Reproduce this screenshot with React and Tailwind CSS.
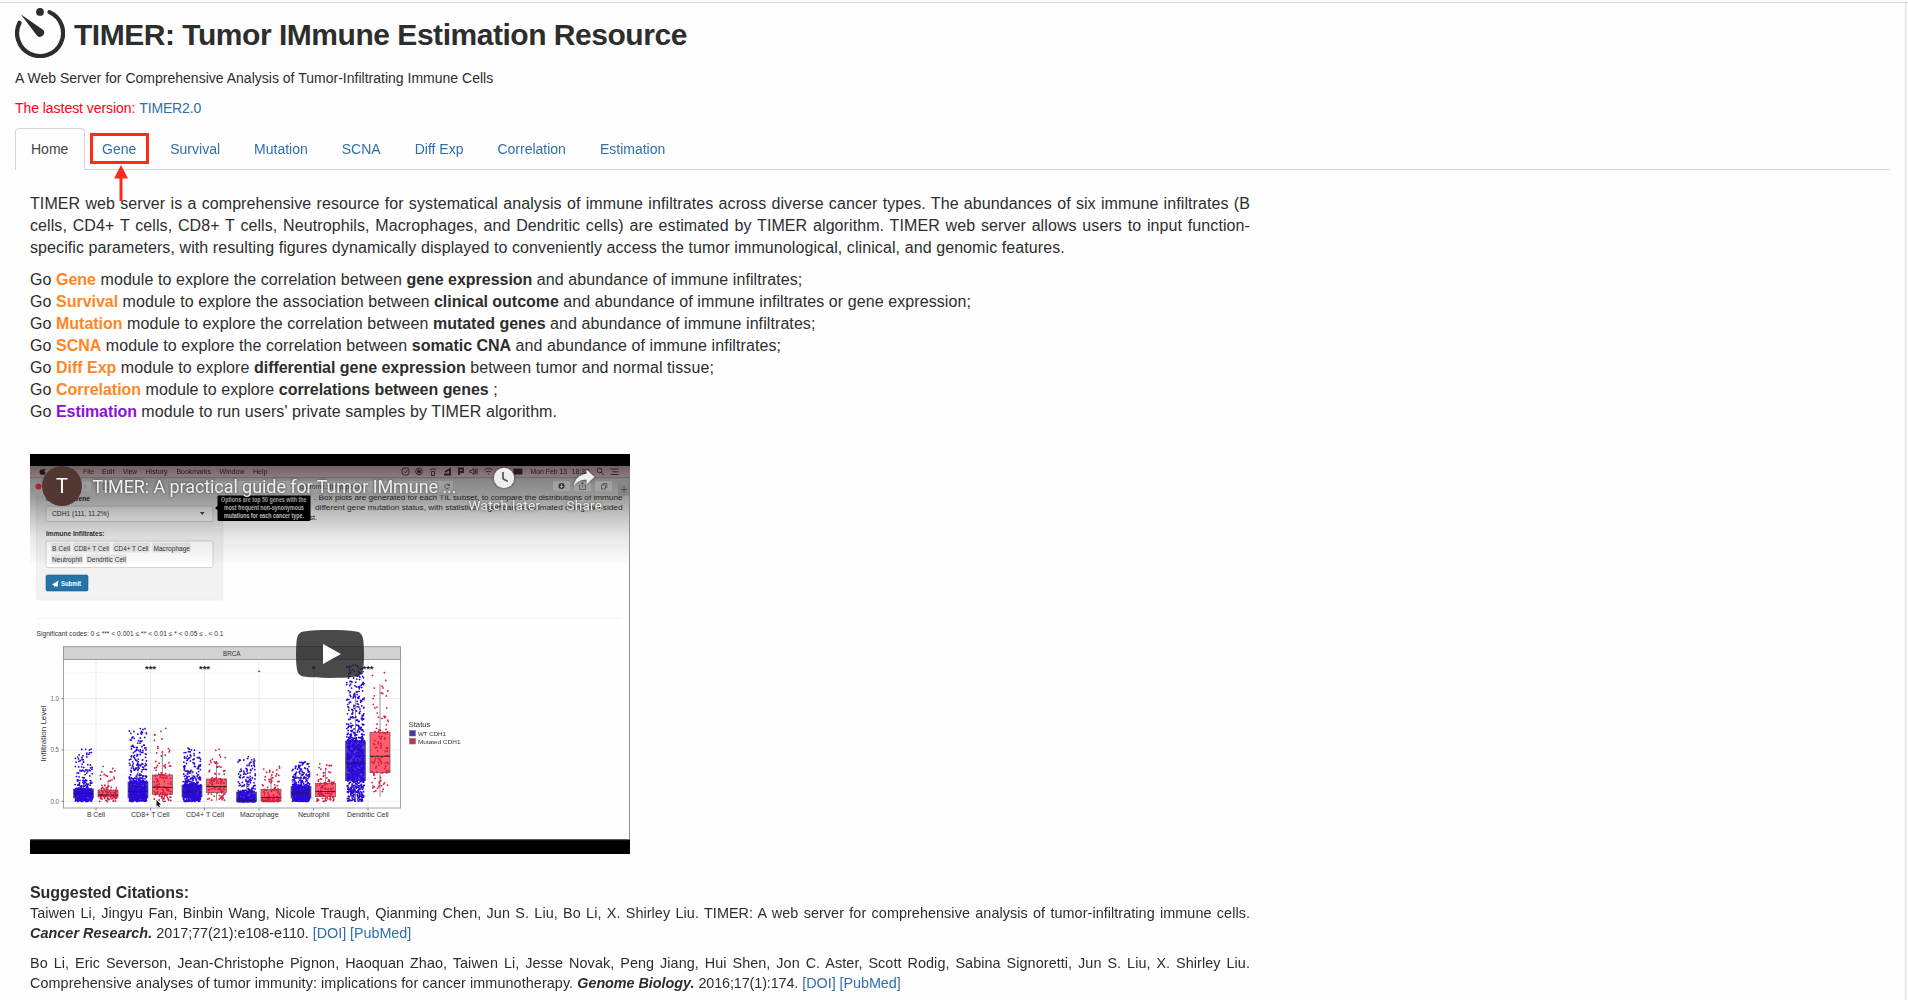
const TABS = ["Home", "Gene", "Survival", "Mutation", "SCNA", "Diff Exp", "Correlation", "Estimation"];

const MODULES = [
  { name: "Gene", before: "module to explore the correlation between", strong: "gene expression", after: "and abundance of immune infiltrates;" },
  { name: "Survival", before: "module to explore the association between", strong: "clinical outcome", after: "and abundance of immune infiltrates or gene expression;" },
  { name: "Mutation", before: "module to explore the correlation between", strong: "mutated genes", after: "and abundance of immune infiltrates;" },
  { name: "SCNA", before: "module to explore the correlation between", strong: "somatic CNA", after: "and abundance of immune infiltrates;" },
  { name: "Diff Exp", before: "module to explore", strong: "differential gene expression", after: "between tumor and normal tissue;" },
  { name: "Correlation", before: "module to explore", strong: "correlations between genes", after: ";" },
];

// Box plot groups: centre x, box top, median, box bottom, highest and lowest point, point count
const GROUPS = [
  { label: "B Cell", x: 66, lx: [57, 75], wt: [335, 339.5, 344, 295, 347.5, 380], mut: [336, 341, 343, 311, 347.5, 100], mark: "" },
  { label: "CD8+ T Cell", x: 120.5, lx: [101, 139.5], wt: [328, 337.5, 344, 274, 347.5, 620], mut: [321, 333.3, 340.3, 272, 347.5, 120], mark: "***" },
  { label: "CD4+ T Cell", x: 174.5, lx: [156, 194], wt: [331, 338, 343, 293, 347.5, 520], mut: [325, 332.5, 338.5, 295, 347, 110], mark: "***" },
  { label: "Macrophage", x: 229, lx: [210, 248.5], wt: [338, 346, 347.5, 302, 347.5, 400], mut: [335.5, 343.5, 347, 310, 347.5, 110], mark: "." },
  { label: "Neutrophil", x: 283.5, lx: [268, 299.5], wt: [332.5, 339, 344, 308, 347.5, 500], mut: [329.3, 337.5, 342.7, 309, 347.5, 110], mark: "*" },
  { label: "Dendritic Cell", x: 338, lx: [317, 358.5], wt: [287, 309.3, 326.7, 211, 347.5, 850], mut: [278.3, 302.3, 318.7, 213, 340, 120], mark: "***" },
];

function makeRandom(seed) {
  let s = seed;
  return () => {
    s = (s * 16807) % 2147483647;
    return s / 2147483647;
  };
}

function scatter(cx, [q3, med, q1, top, bottom, count], seed) {
  const rnd = makeRandom(seed);
  const pts = [];
  for (let i = 0; i < count; i++) {
    const u = i / count;
    let y;
    if (u < 0.25) y = med + rnd() * (q1 - med + 0.5);
    else if (u < 0.5) y = q3 + rnd() * (med - q3);
    else if (u < 0.7) y = q1 + rnd() * (bottom - q1);
    else y = q3 - (q3 - top) * Math.pow(rnd(), 1.9);
    pts.push([cx + (rnd() - 0.5) * 17.5, y]);
  }
  return pts.map(([x, y]) => `M${x.toFixed(1)} ${y.toFixed(1)}h.01`).join("");
}

function Box({ cx, d, fill, dot, seed }) {
  const [q3, med, q1, top] = d;
  const whisker = Math.max(top + 6, q3 - (q1 - q3) * 1.2);
  return (
    <g>
      <path d={`M${cx} ${whisker}V${q3}M${cx} ${q1}V${Math.min(347.5, q1 + (q1 - q3) * 0.6)}`} stroke="#777" strokeWidth="0.8" />
      <rect x={cx - 10} y={q3} width="20" height={q1 - q3} fill={fill} stroke="#555" strokeWidth="0.7" />
      <path d={scatter(cx, d, seed)} stroke={dot} strokeWidth="1.8" strokeLinecap="round" />
      <path d={`M${cx - 10} ${med}h20`} stroke="#222" strokeWidth="0.9" />
    </g>
  );
}

function Label({ x, x2, y, size = 7, fill = "#333", children, ...rest }) {
  return (
    <text x={x} y={y} fontSize={size} fill={fill} textLength={x2 - x} lengthAdjust="spacingAndGlyphs" {...rest}>
      {children}
    </text>
  );
}

function VideoStill() {
  return (
    <svg width="600" height="400" viewBox="0 0 600 400" fill="none" className="block font-['Liberation_Sans',sans-serif]">
      <defs>
        <linearGradient id="shade" x1="0" y1="0" x2="0" y2="1">
          <stop offset="0" stopColor="#000" stopOpacity="0.4" />
          <stop offset="0.3" stopColor="#000" stopOpacity="0.23" />
          <stop offset="0.6" stopColor="#000" stopOpacity="0.09" />
          <stop offset="1" stopColor="#000" stopOpacity="0.012" />
        </linearGradient>
        <linearGradient id="menu" x1="0" y1="0" x2="0" y2="1">
          <stop offset="0" stopColor="#6f6063" />
          <stop offset="1" stopColor="#8d7c80" />
        </linearGradient>
        <linearGradient id="bar" x1="0" y1="0" x2="0" y2="1">
          <stop offset="0" stopColor="#858585" />
          <stop offset="1" stopColor="#999" />
        </linearGradient>
      </defs>
      <rect width="600" height="400" fill="#000" />
      <g className="blur-[0.35px]">
        <rect y="12" width="600" height="374" fill="#fefefe" />

        {/* Form panel of the recorded page */}
        <rect x="6.5" y="38" width="186.5" height="108" rx="2" fill="#f2f2f2" stroke="#e8e8e8" strokeWidth="0.6" />
        <Label x={16} x2={60} y={46.5} fontWeight="bold">Mutated Gene</Label>
        <rect x="16" y="52" width="167" height="15.5" rx="1.5" fill="#fff" stroke="#ccc" strokeWidth="0.8" />
        <Label x={22} x2={79} y={61.8}>CDH1 (111, 11.2%)</Label>
        <path d="M170 58h4.500l-2.250 3z" fill="#444" />
        <Label x={16} x2={74.5} y={81.5} fontWeight="bold">Immune Infiltrates:</Label>
        <rect x="16" y="87" width="167" height="26.5" rx="1.5" fill="#fff" stroke="#ccc" strokeWidth="0.8" />
        {[[21, 41, 96.5, "B Cell"], [43, 80, 96.5, "CD8+ T Cell"], [83, 119.5, 96.5, "CD4+ T Cell"], [122.5, 161, 96.5, "Macrophage"], [21, 53, 108, "Neutrophil"], [56, 97, 108, "Dendritic Cell"]].map(([a, b, y, t]) => (
          <g key={t}>
            <rect x={a} y={y - 7.5} width={b - a} height="9.5" rx="1" fill="#ececec" />
            <Label x={a + 1} x2={b - 1} y={y}>{t}</Label>
          </g>
        ))}
        <rect x="16" y="121" width="42" height="16" rx="1.5" fill="#2574a9" stroke="#1c5f8c" strokeWidth="0.6" />
        <path d="M22 130.500l6.500-4-1 6.500-2-.9-1.300 1.500v-2.200z" fill="#fff" />
        <Label x={31} x2={51} y={131.5} fill="#fff" fontWeight="bold">Submit</Label>
        <path d="M6.500 164.500H592" stroke="#f3f3f3" />
        <Label x={6.5} x2={193.5} y={182}>Significant codes: 0 ≤ *** &lt; 0.001 ≤ ** &lt; 0.01 ≤ * &lt; 0.05 ≤ . &lt; 0.1</Label>

        <Label x={284} x2={592.5} y={45.5}>. Box plots are generated for each TIL subset, to compare the distributions of immune</Label>
        <Label x={285} x2={592.5} y={56}>different gene mutation status, with statistical significance estimated using two-sided</Label>
        <Label x={269} x2={287} y={65.5}>t-test.</Label>
        <rect x="187.5" y="40" width="93" height="27" rx="1.5" fill="#000" />
        <path d="M185 54l3-2.500v5z" fill="#000" />
        <g fontWeight="bold">
          <Label x={191} x2={276.5} y={47.5} fill="#eee">Options are top 50 genes with the</Label>
          <Label x={194} x2={274} y={55.8} fill="#eee">most frequent non-synonymous</Label>
          <Label x={194} x2={274} y={64} fill="#eee">mutations for each cancer type.</Label>
        </g>

        {/* Box plot */}
        <rect x="33.5" y="192.7" width="337" height="12.8" fill="#d3d3d3" stroke="#888" strokeWidth="0.8" />
        <Label x={193} x2={210.5} y={201.5}>BRCA</Label>
        <rect x="33.5" y="205.5" width="337" height="148.5" fill="#fff" />
        <path d="M34 244.500H370M34 296H370M34 347.300H370M66 206V354M120.500 206V354M174.500 206V354M229 206V354M283.500 206V354M338 206V354" stroke="#e9e9e9" strokeWidth="0.8" />
        <path d="M34 218.500H370M34 270H370M34 321.500H370" stroke="#f3f3f3" strokeWidth="0.7" />
        {GROUPS.map((g, i) => (
          <g key={g.label}>
            <Box cx={g.x - 12.5} d={g.wt} fill="#4a3fd8" dot="#2c08d8" seed={i * 97 + 1311} />
            <Box cx={g.x + 12} d={g.mut} fill="#ff5f70" dot="#dc1a3e" seed={i * 89 + 7717} />
            <path d={`M${g.x} 354v2.500`} stroke="#666" strokeWidth="0.8" />
            <Label x={g.lx[0]} x2={g.lx[1]} y={362.5}>{g.label}</Label>
            <text x={g.x} y={217.5} fontSize="9.5" fontWeight="bold" textAnchor="middle" fill="#222">{g.mark}</text>
          </g>
        ))}
        <rect x="33.5" y="205.5" width="337" height="148.5" stroke="#999" strokeWidth="0.9" />
        <path d="M31.500 244.500h2M31.500 296h2M31.500 347.300h2" stroke="#666" strokeWidth="0.8" />
        <Label x={20.5} x2={29} y={246.8} size={6.5} fill="#666">1.0</Label>
        <Label x={20.5} x2={29} y={298.3} size={6.5} fill="#666">0.5</Label>
        <Label x={20.5} x2={29} y={349.6} size={6.5} fill="#666">0.0</Label>
        <Label x={0} x2={56} y={0} size={7.5} transform="translate(16 307.5) rotate(-90)">Infiltration Level</Label>
        <path d="M126.500 346l4.500 4.500-2 .2 1 2-1.200.5-.9-2-1.400 1.200z" fill="#111" />
        <Label x={378.5} x2={400.5} y={273}>Status</Label>
        <rect x="379.5" y="276.5" width="6" height="5.5" fill="#4037b5" stroke="#777" strokeWidth="0.6" />
        <rect x="379.5" y="284.5" width="6" height="5.5" fill="#c0364a" stroke="#777" strokeWidth="0.6" />
        <Label x={388} x2={416} y={281.5} size={6.2}>WT CDH1</Label>
        <Label x={388} x2={430.5} y={289.8} size={6.2}>Mutated CDH1</Label>

        {/* Player's top shade over the page, then the desktop bars */}
        <rect y="41" width="600" height="69" fill="url(#shade)" />
        <rect y="12" width="600" height="12" fill="url(#menu)" />
        <rect y="24" width="600" height="17.5" fill="url(#bar)" />
        <path d="M0 23.700H600" stroke="#555" strokeWidth="0.6" />
        <path d="M12.500 15.200q.2-1.200 1.200-1.700q0 1.300-1.200 1.700M12.300 15.800c-1-.6-2.800-.2-2.800 2 0 1.400 1 3 1.900 3 .6 0 .8-.3 1.300-.3s.7.300 1.300.3c.7 0 1.400-1 1.700-2-1.600-.7-1.400-2.500-.1-3.200-.9-1-2.200-.4-3.300.2" fill="#1c1719" />
        {[[53, 64, "File"], [72, 84.5, "Edit"], [93, 107, "View"], [115.5, 137.5, "History"], [146.5, 181, "Bookmarks"], [189.5, 214.5, "Window"], [223, 237.5, "Help"], [500.5, 537, "Mon Feb 13"], [541.5, 559, "18:37"]].map(([a, b, t]) => (
          <Label key={t} x={a} x2={b} y={20.3} size={7.2} fill="#1f191b">{t}</Label>
        ))}
        <g stroke="#241d1f" strokeWidth="0.9">
          <rect x="372" y="14" width="7" height="7" rx="2.5" />
          <path d="M374 17.500l1.300 1.500 2.200-3" />
          <circle cx="389" cy="17.5" r="3.3" />
          <circle cx="389" cy="17.5" r="1.5" fill="#241d1f" />
          <path d="M400 16q3-3 6 0M401.500 17.500h3v4h-3z" />
          <path d="M414 20.500h7M415 18l5-3v5" strokeWidth="1.8" />
          <path d="M429 21v-6.500h4v3.500h-3" strokeWidth="1.8" />
          <path d="M440 16.500h1.500l2.500-2v6l-2.500-2H440zM445.500 15.500v4M447 14.500v6" />
          <path d="M454.500 16q4-3.500 8 0M456 18q2.500-2 5 0M458 20h1" />
          <rect x="484" y="15" width="8" height="5" fill="#241d1f" />
          <circle cx="569.5" cy="16.5" r="2.3" />
          <path d="M571.200 18.200l2.800 3M580.500 15h8M582.500 17.800h6M580.500 20.500h8" />
        </g>
        <circle cx="8.5" cy="32.5" r="3" fill="#b01f35" />
        <rect x="44" y="27.5" width="17" height="10" rx="1.5" fill="#9d9d9d" />
        <path d="M54 30.500l2 2-2 2" stroke="#666" strokeWidth="0.8" />
        <rect x="69" y="27.5" width="14" height="10" rx="1.5" fill="#9d9d9d" />
        <path d="M73 29.500h6v6h-6zM75 29.500v6" stroke="#555" strokeWidth="0.7" />
        <rect x="178" y="27" width="245" height="11" rx="2" fill="#9d9d9d" />
        <Label x={270} x2={333} y={35} fill="#333">cistrome.shinyapps.io</Label>
        <path d="M419 31a2.300 2.300 0 1 0 .3 2.200M419.500 29.500v2h-2" stroke="#444" strokeWidth="0.8" />
        <rect x="523" y="27.3" width="17" height="10" rx="1.5" fill="#a2a2a2" />
        <rect x="544" y="27.3" width="17" height="10" rx="1.5" fill="#a2a2a2" />
        <rect x="565" y="27.3" width="17" height="10" rx="1.5" fill="#a2a2a2" />
        <circle cx="531.5" cy="32" r="3" fill="#333" />
        <path d="M531.500 30v3.500m-1.500-1.500l1.500 1.600 1.500-1.600" stroke="#ccc" strokeWidth="0.8" />
        <path d="M550.500 31h-1v4.500h6V31h-1M552.500 33.500v-5m-1.500 1.500l1.500-1.600 1.500 1.600M571.500 31h4v4h-4zM573 31v-1.500h4v4h-1.500" stroke="#444" strokeWidth="0.7" />
        <rect x="588" y="29.5" width="12" height="12" fill="#838383" />
        <path d="M591 35.500h6M594 32.500v6" stroke="#444" strokeWidth="0.8" />
        <path d="M599.500 24V386" stroke="#777" strokeWidth="0.8" />
      </g>
      <rect y="385.5" width="600" height="14.5" fill="#000" />
      <path d="M0 385.700H598" stroke="#4d555c" strokeWidth="1" />

      {/* Player controls */}
      <circle cx="32" cy="32" r="20" fill="#533731" />
      <g className="font-['Roboto',sans-serif]" fill="#fff">
        <text x="32" y="39.3" fontSize="20" textAnchor="middle">T</text>
        <g className="[filter:drop-shadow(0_0_1.5px_rgba(0,0,0,0.6))]" fill="#eee">
          <text x="62.5" y="39.2" fontSize="18" textLength="364" lengthAdjust="spacing">TIMER: A practical guide for Tumor IMmune ...</text>
          <text x="438.5" y="55.7" fontSize="13.5" textLength="71.5" lengthAdjust="spacing">Watch later</text>
          <text x="536.5" y="55.7" fontSize="13.5" textLength="35.5" lengthAdjust="spacing">Share</text>
          <circle cx="474" cy="24" r="10.2" />
          <path d="M556.500 15.500l8 7.500-8 7.500v-4.700c-6 0-9.500 1.700-12.500 6 1-6.500 4.500-11 12.500-12z" />
        </g>
      </g>
      <path d="M473 18v6.700l4.800 2.800" stroke="#555" strokeWidth="1.7" />
      <path d="M333.300 186.400c-.6-5.600-2.500-8.400-7.300-9C319 176.200 310 176 300 176s-19 .2-26 1.400c-4.800.6-6.700 3.400-7.300 9C266.200 191 266 195 266 200s.2 9 .7 13.600c.6 5.600 2.500 8.400 7.300 9 7 1.200 16 1.400 26 1.400s19-.2 26-1.400c4.800-.6 6.700-3.400 7.300-9 .5-4.600.7-8.600.7-13.600s-.2-9-.7-13.600z" fill="#212121" fillOpacity="0.82" />
      <path d="M293 190v20l18-10z" fill="#fff" />
    </svg>
  );
}

function TimerLogo() {
  return (
    <svg width="50" height="50" viewBox="0 0 50 50" fill="none" className="shrink-0">
      <path d="M34.500 4.100A23 23 0 1 1 4.500 14.800" stroke="#2d2d2d" strokeWidth="4.2" strokeLinecap="round" />
      <circle cx="25" cy="3.9" r="3.9" fill="#2d2d2d" />
      <path d="M5.700 6.200L28.300 22a4.300 4.300 0 0 1-6 6z" fill="#2d2d2d" />
    </svg>
  );
}

function Links() {
  return (
    <span className="tracking-[-0.06px] text-[#2f6fab]">
      <a href="#doi">[DOI]</a> <a href="#pubmed">[PubMed]</a>
    </span>
  );
}

export default function App() {
  return (
    <div className="flex h-[1000px] w-full flex-col overflow-hidden bg-[#fefefe] pt-0.5 font-['Liberation_Sans',Arial,sans-serif] text-sm leading-5 text-[#2d2d2d]">
      <div className="flex min-h-0 flex-1 border-t border-[#d6d6d6]">
        <main className="flex-1 pl-[15px]">
          <header>
            <div className="flex h-[65px] items-start gap-[9px] pt-[5px]">
              <TimerLogo />
              <h1 className="mt-2.5 text-[30px] leading-[33px] font-bold tracking-[-0.47px]">TIMER: Tumor IMmune Estimation Resource</h1>
            </div>
            <p className="tracking-[0.01px]">A Web Server for Comprehensive Analysis of Tumor-Infiltrating Immune Cells</p>
            <p className="mt-2.5 tracking-[-0.05px] text-[#ff0013]">
              The lastest version: <a href="#timer2" className="tracking-[-0.15px] text-[#2f6fab]">TIMER2.0</a>
            </p>
          </header>

          <nav className="mt-2.5 mr-[15px] flex h-[42px] gap-0.5 border-b border-[#d6d6d6]">
            {TABS.map((tab, i) => (
              <a
                key={tab}
                href={"#" + tab}
                className={
                  i === 0
                    ? "-mr-px h-[42px] w-[70px] rounded-t border border-b-0 border-[#d6d6d6] bg-[#fefefe] px-[15px] py-2.5 text-[#444]"
                    : "relative h-[42px] border border-b-0 border-transparent px-[15px] py-2.5 text-[#2f6fab]"
                }
              >
                {tab}
                {tab === "Gene" && (
                  <>
                    <span className="absolute top-1 left-[3px] h-[31px] w-[59px] border-[3px] border-[#fd2b1b]" />
                    <svg width="16" height="38" viewBox="0 0 16 38" className="absolute top-[35px] left-[26px]">
                      <path d="M8 1L15 14.500H9.500V37h-3V14.500H1z" fill="#fd2b1b" />
                    </svg>
                  </>
                )}
              </a>
            ))}
          </nav>

          <section className="mt-[23px] ml-[15px] w-[1220px]">
            <p className="text-justify text-base leading-[22px] tracking-[0.09px]">
              TIMER web server is a comprehensive resource for systematical analysis of immune infiltrates across diverse cancer types. The abundances of six immune infiltrates (B cells, CD4+ T cells, CD8+ T cells, Neutrophils, Macrophages, and Dendritic cells) are estimated by TIMER algorithm. TIMER web server allows users to input function-specific parameters, with resulting figures dynamically displayed to conveniently access the tumor immunological, clinical, and genomic features.
            </p>
            <ul className="mt-2.5 text-base leading-[22px] tracking-[0.085px]">
              {MODULES.map((m) => (
                <li key={m.name}>
                  Go <b className="tracking-[-0.03px] text-[#ff8625]">{m.name}</b> {m.before} <b className="tracking-[-0.03px]">{m.strong}</b> {m.after}
                </li>
              ))}
              <li>
                Go <b className="tracking-[-0.1px] text-[#8a10dc]">Estimation</b> module to run users' private samples by TIMER algorithm.
              </li>
            </ul>

            <div className="mt-[31px] h-[400px] w-[600px]">
              <VideoStill />
            </div>

            <h2 className="mt-7 text-base leading-[22px] font-bold tracking-[-0.05px]">Suggested Citations:</h2>
            <p className="-mt-px text-justify text-[14.4px] leading-5 tracking-[0.06px]">
              Taiwen Li, Jingyu Fan, Binbin Wang, Nicole Traugh, Qianming Chen, Jun S. Liu, Bo Li, X. Shirley Liu. TIMER: A web server for comprehensive analysis of tumor-infiltrating immune cells. <b className="tracking-[0.04px] italic">Cancer Research.</b> <span className="tracking-[-0.04px]">2017;77(21):e108-e110.</span> <Links />
            </p>
            <p className="mt-2.5 text-justify text-[14.4px] leading-5 tracking-[0.075px]">
              Bo Li, Eric Severson, Jean-Christophe Pignon, Haoquan Zhao, Taiwen Li, Jesse Novak, Peng Jiang, Hui Shen, Jon C. Aster, Scott Rodig, Sabina Signoretti, Jun S. Liu, X. Shirley Liu. Comprehensive analyses of tumor immunity: implications for cancer immunotherapy. <b className="tracking-[-0.05px] italic">Genome Biology.</b> <span className="tracking-[-0.12px]">2016;17(1):174.</span> <Links />
            </p>
          </section>
        </main>
        <div className="w-[3px] border-l border-[#e2e2e2] bg-[#f8f8f8]" />
      </div>
    </div>
  );
}
